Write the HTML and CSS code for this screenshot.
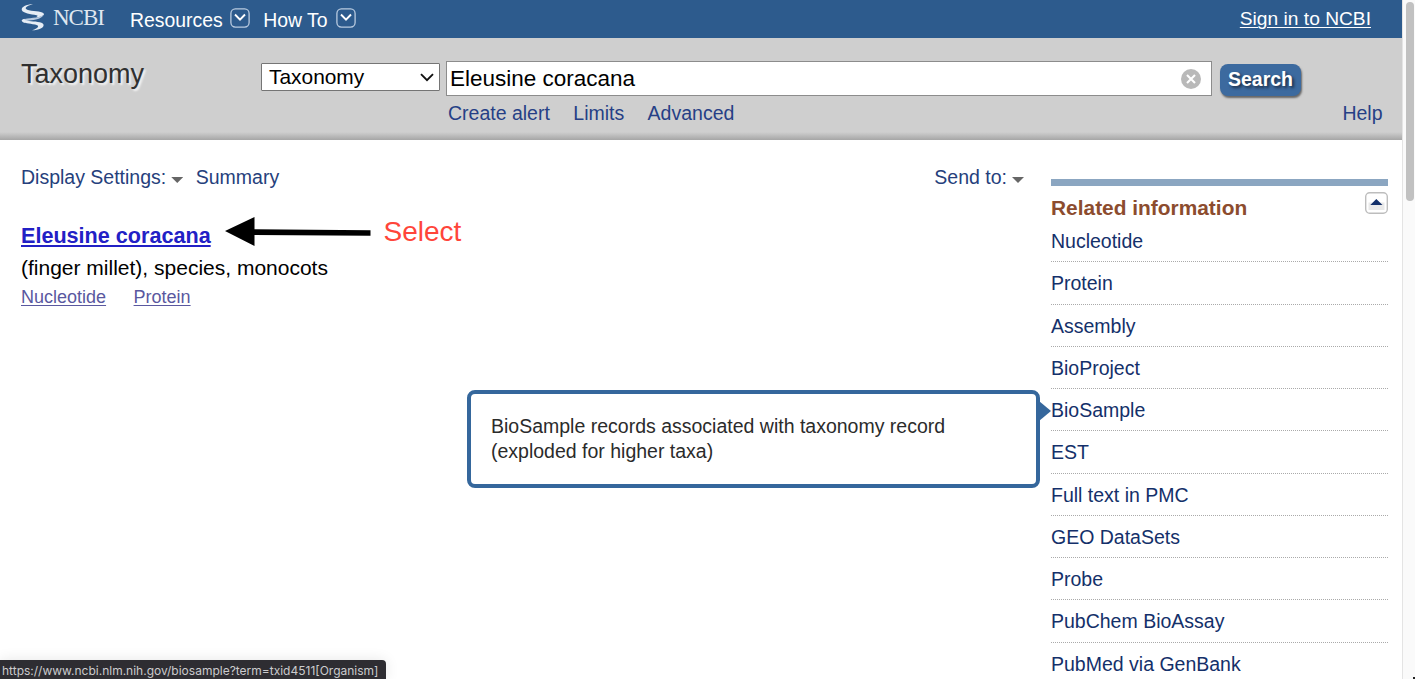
FILE: index.html
```html
<!DOCTYPE html>
<html lang="en">
<head>
<meta charset="utf-8">
<title>Eleusine coracana - Taxonomy - NCBI</title>
<link rel="stylesheet" href="styles.css">
</head>
<body>
<div class="window">
  <div class="page">
    <header class="topbar">
      <svg class="helix" viewBox="0 0 24 28" width="24" height="28">
        <path fill="#e6edf5" d="M12 1C5 1.500 0 4 .8 7C1.800 10.500 10 11 15.500 12.300C17 12.700 17 13.300 15 14.200C18.500 14.300 23 13 23 11C22.500 8.500 14 8.500 8 7.300C2.500 6 4 3.500 12 1Z"/>
        <path fill="#b9cbe0" d="M22.500 12C21 15.500 14 17 8.500 17.500C4 18 3.500 19 5 20C1.500 19.500 .3 18 2 16.700C6 14.500 18 15.500 22.500 12Z"/>
        <path fill="#e6edf5" d="M.8 18C3 20.300 8 20.500 14 21.500C19 22.300 18 25 11 27.300C18 27.200 23.500 24.500 22.500 21.500C21.500 18.500 13 18.700 8 18C4 17.400 3 16.500 3.500 15.800C1.500 16.300 .3 17 .8 18Z"/>
      </svg>
      <span class="brand">NCBI</span>
      <nav class="menus">
        <a class="menu">Resources
          <svg viewBox="0 0 20 20" width="20" height="20"><rect x=".9" y=".9" width="18.200" height="18.200" rx="4.500" fill="none" stroke="#b9cbe0" stroke-width="1.300"/><path d="M5 6.500L10 11.700L15 6.500" fill="none" stroke="#fff" stroke-width="1.900"/></svg>
        </a>
        <a class="menu">How To
          <svg viewBox="0 0 20 20" width="20" height="20"><rect x=".9" y=".9" width="18.200" height="18.200" rx="4.500" fill="none" stroke="#b9cbe0" stroke-width="1.300"/><path d="M5 6.500L10 11.700L15 6.500" fill="none" stroke="#fff" stroke-width="1.900"/></svg>
        </a>
      </nav>
      <a class="signin">Sign in to NCBI</a>
    </header>

    <section class="searchbar">
      <h1 class="database">Taxonomy</h1>
      <div class="picker">
        <span>Taxonomy</span>
        <svg viewBox="0 0 14 9" width="14" height="9"><path d="M1 1.200L7 7.200L13 1.200" fill="none" stroke="#111" stroke-width="1.900"/></svg>
      </div>
      <div class="query">
        <div class="field">
          <span>Eleusine coracana</span>
          <svg viewBox="0 0 20 20" width="20" height="20"><circle cx="10" cy="10" r="10" fill="#b9b9b9"/><path d="M6 6L14 14M14 6L6 14" stroke="#fff" stroke-width="2.100"/></svg>
        </div>
        <div class="tools"><a>Create alert</a><a>Limits</a><a>Advanced</a></div>
      </div>
      <div class="actions">
        <div class="search-button">Search</div>
        <a class="help">Help</a>
      </div>
    </section>

    <main class="content">
      <section class="results">
        <div class="display">
          <a>Display Settings:</a><i class="caret"></i><a class="format">Summary</a>
          <a class="send">Send to:</a><i class="caret"></i>
        </div>
        <div class="hit">
          <a class="hit-title">Eleusine coracana</a>
          <svg class="arrow" viewBox="0 0 146 30" width="146" height="30"><path d="M0 14L29.500 0V12.200L145.500 13.200V18.800L29.500 18V29Z" fill="#000"/></svg>
          <span class="note">Select</span>
        </div>
        <p class="summary">(finger millet), species, monocots</p>
        <div class="links"><a>Nucleotide</a><a>Protein</a></div>
      </section>
      <aside class="related">
        <div class="related-head">
          <h2>Related information</h2>
          <svg viewBox="0 0 24 22" width="24" height="22"><rect x="1.700" y=".7" width="21.600" height="20.600" rx="4" fill="#fff" stroke="#bdbdbd" stroke-width="1.400"/><path d="M4.500 10.500H20.500V18H4.500Z" fill="#e9e9e9"/><path d="M6.300 13L12.300 7L18.500 13Z" fill="#14306a"/></svg>
        </div>
        <ul>
          <li>Nucleotide</li>
          <li>Protein</li>
          <li>Assembly</li>
          <li>BioProject</li>
          <li class="active">BioSample
            <div class="tooltip">BioSample records associated with taxonomy record<br>(exploded for higher taxa)</div>
          </li>
          <li>EST</li>
          <li>Full text in PMC</li>
          <li>GEO DataSets</li>
          <li>Probe</li>
          <li>PubChem BioAssay</li>
          <li>PubMed via GenBank</li>
        </ul>
      </aside>
    </main>
  </div>
  <div class="scroll"><div class="thumb"></div></div>
  <div class="status">https://www.ncbi.nlm.nih.gov/biosample?term=txid4511[Organism]</div>
</div>
</body>
</html>
```
FILE: styles.css
```css
* { box-sizing: border-box; }
body { margin: 0; background: #fff; font: 19.5px/24px "Liberation Sans", Arial, sans-serif; color: #000; }
h1, h2, p, ul { margin: 0; padding: 0; }
svg { display: block; flex: none; }
.window { position: relative; display: flex; width: 1415px; height: 679px; overflow: hidden; }
.page { width: 1402px; height: 679px; overflow: hidden; flex: none; }

.topbar { display: flex; height: 38px; padding: 0 31px 0 21px; background: #2d5b8d; color: #fff; font-size: 19.4px; }
.helix { margin-top: 3px; }
.brand { margin: 6px 0 0 8px; width: 52px; font: 23px/24px "Liberation Serif", "Times New Roman", serif; letter-spacing: -1px; color: #dfe7f0; }
.menus { display: flex; gap: 13.5px; margin: 8px 0 0 25px; }
.menu { display: flex; gap: 7px; white-space: nowrap; line-height: 25px; }
.menu:last-child { gap: 8px; }
.signin { margin: 7px 0 0 auto; font-size: 19.2px; text-decoration: underline; text-underline-offset: 2px; text-decoration-thickness: 1px; }

.searchbar { display: flex; height: 102px; padding-left: 21px; background: linear-gradient(#cfcfcf 0, #cfcfcf 94px, #a6a6a6 102px); color: #263f86; }
.database { width: 240px; margin-top: 20px; font-size: 27px; line-height: 32px; font-weight: normal; color: #303030; text-shadow: 2px 2px 2px #f4f4f4; }
.picker { display: flex; align-items: center; justify-content: space-between; width: 179px; height: 28px; margin: 25px 6px 0 0; padding: 0 5px 0 7px; border: 1px solid #757575; border-radius: 1px; background: #fff; color: #000; font-size: 20.9px; }
.query { width: 766px; margin-top: 23px; }
.field { display: flex; align-items: center; justify-content: space-between; height: 35px; padding: 0 10px 0 3px; border: 1px solid #8c8c8c; background: #fff; color: #000; font-size: 22.5px; }
.tools { display: flex; gap: 23.4px; margin: 5px 0 0 2px; }
.actions { flex: 1; display: flex; flex-direction: column; margin: 26px 19.500px 0 8px; }
.search-button { width: 81px; height: 32px; border-radius: 8px; background: #3c6a9f; color: #fff; font-weight: bold; line-height: 31px; text-align: center; text-shadow: 2px 2px 3px #1a2c44; box-shadow: 1px 2px 2px #666; }
.help { align-self: flex-end; margin-top: 5px; }

.content { display: flex; padding-left: 21px; }
.results { width: 1003px; margin-right: 27px; padding-top: 25px; }
.display { display: flex; color: #263f7c; }
.caret { width: 12px; height: 6px; margin: 12px 0 0 5px; background: #666; clip-path: polygon(0 0, 100% 0, 50% 100%); }
.format { margin-left: 12.500px; }
.send { margin-left: auto; }
.hit { display: flex; height: 32px; margin-top: 26px; }
.hit-title { width: 203.500px; margin-top: 9px; font-size: 21.6px; font-weight: bold; color: #2220c5; text-decoration: underline; text-decoration-thickness: 2px; text-underline-offset: 2px; }
.arrow { margin-top: 2px; }
.note { margin: 1px 0 0 13px; font-size: 28px; line-height: 32px; color: #ff453a; }
.summary { margin-top: 9px; font-size: 21px; font-variant-ligatures: none; }
.links { display: flex; gap: 27.500px; margin-top: 5px; font-size: 18px; color: #5a589f; text-decoration: underline; text-decoration-thickness: 1px; text-underline-offset: 2px; }

.related { width: 337px; margin-top: 39px; border-top: 7px solid #8ba6c1; color: #14306a; }
.related-head { display: flex; justify-content: space-between; height: 34px; padding-top: 6px; }
.related-head h2 { margin-top: 4px; font-size: 20.9px; line-height: 24px; color: #8c4c2e; }
.related ul { list-style: none; }
.related li { height: 42.27px; padding-top: 9px; border-bottom: 1px dotted #aaa; }
.active { position: relative; }
.tooltip { position: absolute; right: 348px; top: 1px; width: 573px; height: 98px; padding: 20px; border: 4px solid #35679c; border-radius: 8px; background: #fff; color: #2b2b2b; line-height: 25px; white-space: nowrap; }
.tooltip::after { content: ""; position: absolute; left: 568px; top: 7px; width: 12px; height: 20px; background: #35679c; clip-path: polygon(0 0, 100% 50%, 0 100%); }

.scroll { display: flex; flex-direction: column; justify-content: space-between; width: 13px; padding: 2px 1px 0 3px; border-left: 1px solid #e4e4e4; background: #fafafa; }
.scroll::after { content: ""; align-self: flex-end; width: 2px; height: 2px; margin-right: -1px; background: #222; }
.thumb { height: 199px; border-radius: 4px; background: #c1c1c1; }
.status { position: absolute; left: 0; bottom: 0; width: 386px; height: 19px; padding-left: 2px; border-radius: 0 4px 0 0; background: #2e2d32; color: #cbcbcd; font: 12px/21px Inter, sans-serif; white-space: nowrap; box-shadow: 0 0 14px rgba(0,0,0,.1); }
```
